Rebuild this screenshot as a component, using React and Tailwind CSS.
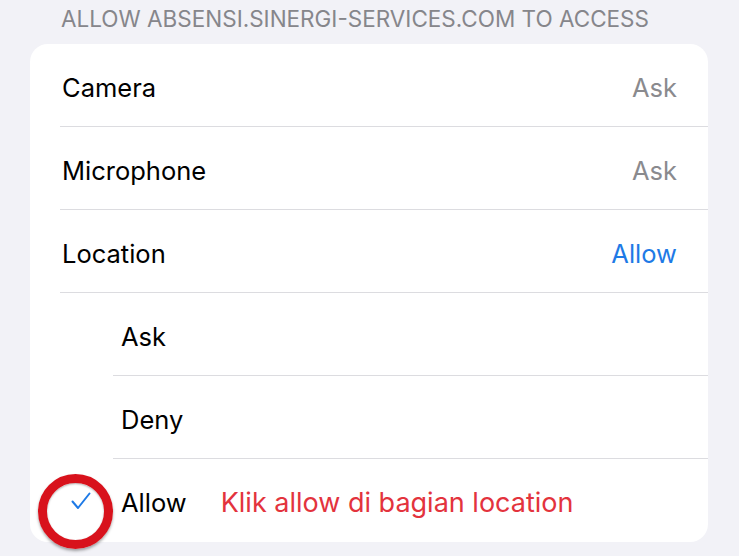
export default function App() {
  const top = [
    { label: 'Camera', value: 'Ask', color: 'text-[#8a8a8e]' },
    { label: 'Microphone', value: 'Ask', color: 'text-[#8a8a8e]' },
    { label: 'Location', value: 'Allow', color: 'text-[#1e7ae6]' },
  ]

  return (
    <div className="w-[739px] h-[556px] bg-[#f2f2f7] overflow-hidden font-['Inter',sans-serif] antialiased">
      <div className="h-[44px] pl-[61px] pt-[5px] text-[22.5px] leading-[28px] text-[#86868b]">
        ALLOW ABSENSI.SINERGI-SERVICES.COM TO ACCESS
      </div>

      <div className="relative ml-[30px] w-[678px] bg-white rounded-[18px]">
        {top.map((row) => (
          <div key={row.label} className="flex h-[83px] pl-[30px]">
            <div className="flex flex-1 items-center justify-between border-b border-[#dcdce0] pl-[2px] pr-[31px] pt-[6px] text-[25.5px]">
              <span className="text-black">{row.label}</span>
              <span className={row.color}>{row.value}</span>
            </div>
          </div>
        ))}

        {['Ask', 'Deny'].map((opt) => (
          <div key={opt} className="flex h-[83px] pl-[83px]">
            <div className="flex flex-1 items-center border-b border-[#dcdce0] pl-[8px] pt-[6px] text-[25.5px] text-black">
              {opt}
            </div>
          </div>
        ))}

        <div className="flex h-[83px] items-center pt-[6px] text-[25.5px]">
          <div className="w-[91px] flex justify-end pr-[30px] pb-[6px]">
            <svg width="20" height="18" viewBox="0 0 20 18" fill="none">
              <path d="M1.5 9.5 L7 16 L18.5 1.5" stroke="#1e7ae6" strokeWidth="2" strokeLinecap="round" strokeLinejoin="round" />
            </svg>
          </div>
          <span className="text-black">Allow</span>
          <span className="ml-[34px] text-[27px] text-[#e3333d]">Klik allow di bagian location</span>
        </div>

        <div className="absolute left-[8px] top-[430px] w-[75px] h-[75px] rounded-full border-[9px] border-[#d8121c] shadow-[0_2px_3px_rgba(0,0,0,0.35),inset_0_1px_2px_rgba(0,0,0,0.3)]" />
      </div>
    </div>
  )
}
